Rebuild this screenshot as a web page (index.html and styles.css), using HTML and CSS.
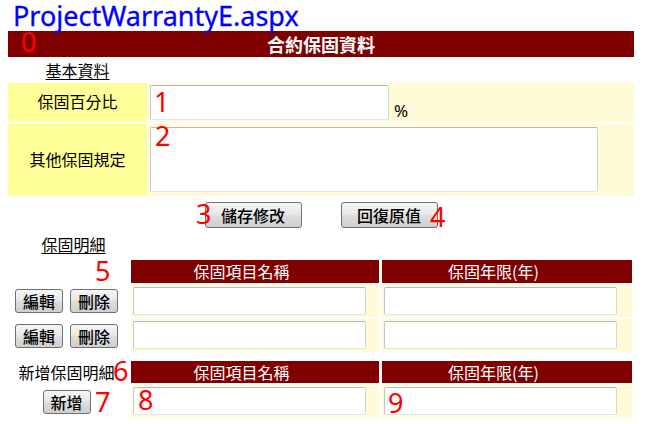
FILE: index.html
```html
<!DOCTYPE html>
<html lang="zh-Hant">
<head>
<meta charset="utf-8">
<title>ProjectWarrantyE.aspx</title>
<link rel="stylesheet" href="styles.css">
</head>
<body>
<div class="page">
  <h1 class="page-title">ProjectWarrantyE.aspx</h1>
  <div class="main-bar">合約保固資料</div>

  <div class="section-title"><span>基本資料</span></div>
  <div class="form-grid">
    <div class="label-cell">保固百分比</div>
    <div class="value-cell value-pct">
      <input class="txt txt-pct" type="text">
      <span class="pct">%</span>
    </div>
    <div class="label-cell">其他保固規定</div>
    <div class="value-cell">
      <textarea class="txt txt-area"></textarea>
    </div>
  </div>

  <div class="action-row">
    <button class="btn btn-lg" type="button">儲存修改</button>
    <button class="btn btn-lg" type="button">回復原值</button>
  </div>

  <div class="section-title section-detail"><span>保固明細</span></div>
  <div class="detail-grid">
    <div class="side-cell"></div>
    <div class="head-cell">保固項目名稱</div>
    <div class="head-cell">保固年限(年)</div>

    <div class="side-cell"><button class="btn btn-sm" type="button">編輯</button><button class="btn btn-sm" type="button">刪除</button></div>
    <div class="data-cell"><input class="txt txt-row" type="text"></div>
    <div class="data-cell"><input class="txt txt-row" type="text"></div>

    <div class="side-cell"><button class="btn btn-sm" type="button">編輯</button><button class="btn btn-sm" type="button">刪除</button></div>
    <div class="data-cell"><input class="txt txt-row" type="text"></div>
    <div class="data-cell"><input class="txt txt-row" type="text"></div>
  </div>

  <div class="detail-grid detail-new">
    <div class="side-cell side-text">新增保固明細</div>
    <div class="head-cell">保固項目名稱</div>
    <div class="head-cell">保固年限(年)</div>

    <div class="side-cell"><button class="btn btn-sm" type="button">新增</button></div>
    <div class="data-cell"><input class="txt txt-row" type="text"></div>
    <div class="data-cell"><input class="txt txt-row" type="text"></div>
  </div>

  <span class="mark m0">0</span>
  <span class="mark m1">1</span>
  <span class="mark m2">2</span>
  <span class="mark m3">3</span>
  <span class="mark m4">4</span>
  <span class="mark m5">5</span>
  <span class="mark m6">6</span>
  <span class="mark m7">7</span>
  <span class="mark m8">8</span>
  <span class="mark m9">9</span>
</div>
</body>
</html>
```

FILE: styles.css
```css
* { box-sizing: border-box; }

html, body {
  margin: 0;
  padding: 0;
  background: #ffffff;
}

body {
  font-family: "Noto Sans CJK TC", "Noto Sans", sans-serif;
  font-size: 16px;
  color: #000;
}

.page {
  position: relative;
  width: 645px;
  height: 424px;
  padding: 0 8px;
  overflow: hidden;
}

.page-title {
  margin: 0 0 0 5px;
  font-family: "Noto Sans", "DejaVu Sans", sans-serif;
  font-weight: normal;
  font-size: 27px;
  line-height: 31px;
  height: 31px;
  color: #0000ff;
  -webkit-text-stroke: 0.3px #0000ff;
}

.main-bar {
  width: 626px;
  height: 26px;
  line-height: 26px;
  background: #800000;
  color: #fff;
  font-weight: bold;
  font-size: 18px;
  text-align: center;
}

.section-title {
  width: 139px;
  height: 26px;
  line-height: 26px;
  text-align: center;
}
.section-detail {
  width: 131px;
}
.section-title span {
  text-decoration: underline;
  text-underline-offset: 2px;
}

.form-grid {
  display: grid;
  grid-template-columns: 139px 486px;
  grid-template-rows: 39px 72px;
  column-gap: 1px;
  row-gap: 2px;
}

.label-cell {
  background: #ffff99;
  display: flex;
  align-items: center;
  justify-content: center;
  padding-bottom: 3px;
}

.value-cell {
  background: #fffbd6;
  padding: 2px;
}

.value-pct {
  display: flex;
  align-items: flex-end;
}

.txt {
  display: block;
  margin: 0;
  padding: 0;
  background: #fff;
  border: 1px solid;
  border-color: #b9b9b9 #d6d6d6 #dfe4ec #c6c6c6;
  border-radius: 2px;
  font: inherit;
  outline: none;
  resize: none;
}

.txt-pct {
  width: 239px;
  height: 35px;
}

.pct {
  font-family: "Noto Sans", sans-serif;
  font-size: 17px;
  line-height: 16px;
  margin-left: 5px;
  margin-bottom: 1px;
}

.txt-area {
  width: 448px;
  height: 65px;
  margin-top: 1px;
}

.action-row {
  width: 626px;
  display: flex;
  justify-content: center;
  gap: 39px;
  padding: 6px 0 3px 0;
}

.btn {
  margin: 0;
  padding: 0;
  border: 1px solid #707070;
  border-radius: 3px;
  background: linear-gradient(#f5f5f5 0%, #e9e9e9 45%, #dcdcdc 55%, #cfcfcf 100%);
  font-family: "Noto Sans CJK TC", sans-serif;
  font-size: 16px;
  font-weight: 500;
  color: #000;
  line-height: 1;
}

.btn-lg {
  width: 97px;
  height: 26px;
}

.btn-sm {
  width: 48px;
  height: 24px;
}

.detail-grid {
  display: grid;
  grid-template-columns: 120px 248px 250px;
  grid-template-rows: 23px 32px 33px;
  column-gap: 3px;
  row-gap: 2px;
  margin-top: 3px;
}

.detail-new {
  grid-template-rows: 22px 33px;
  margin-top: 9px;
}

.side-cell {
  display: flex;
  align-items: center;
  justify-content: center;
  gap: 7px;
  padding-right: 3px;
}

.side-text {
  line-height: 22px;
  white-space: nowrap;
}

.head-cell {
  background: #800000;
  color: #fff;
  text-align: center;
  line-height: 23px;
  padding-right: 27px;
}

.detail-new .head-cell {
  line-height: 22px;
}

.data-cell {
  background: #fffbd6;
  padding: 2px 0 0 2px;
}

.txt-row {
  width: 233px;
  height: 28px;
}

.mark {
  position: absolute;
  font-family: "Noto Sans", sans-serif;
  font-size: 27px;
  line-height: 27px;
  color: #ff0000;
}

.m0 { left: 21px; top: 28px; }
.m1 { left: 154px; top: 88px; }
.m2 { left: 155px; top: 122px; }
.m3 { left: 196px; top: 200px; }
.m4 { left: 430px; top: 203px; }
.m5 { left: 95px; top: 257px; }
.m6 { left: 113px; top: 357px; }
.m7 { left: 95px; top: 388px; }
.m8 { left: 138px; top: 386px; }
.m9 { left: 388px; top: 389px; }
```
